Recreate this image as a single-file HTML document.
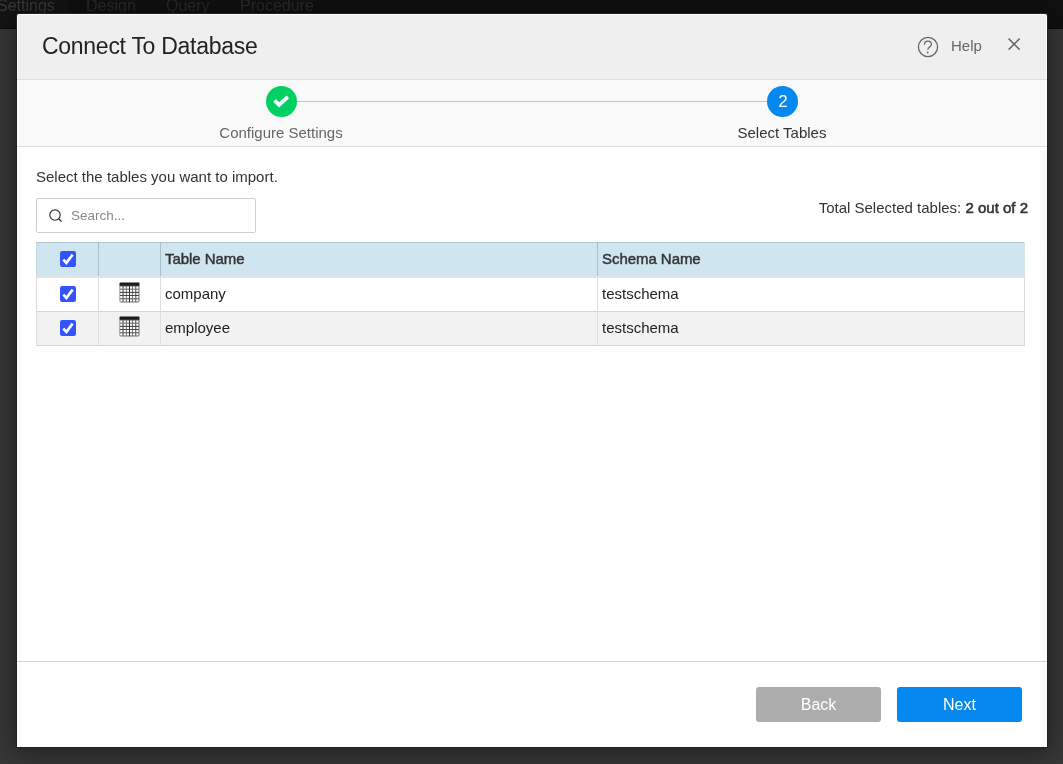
<!DOCTYPE html>
<html><head><meta charset="utf-8">
<style>
*{box-sizing:border-box;margin:0;padding:0}
html,body{width:1063px;height:764px;overflow:hidden;background:#383838;font-family:"Liberation Sans",sans-serif}
.a{position:absolute}
.t{position:absolute;white-space:nowrap;line-height:1;will-change:transform}
</style></head><body>
<div class="a" style="left:0;top:0;width:1063px;height:29px;background:#101010"></div>
<div class="a" style="left:0;top:0;width:68px;height:29px;background:#141414"></div>
<div class="a" style="left:0;top:28px;width:1063px;height:1px;background:#0b0b0b"></div>
<div class="t" style="left:-3px;top:-2px;font-size:16px;color:#3a3a3a">Settings</div>
<div class="t" style="left:86px;top:-2px;font-size:16px;color:#2a2a2a">Design</div>
<div class="t" style="left:166px;top:-2px;font-size:16px;color:#2a2a2a">Query</div>
<div class="t" style="left:240px;top:-2px;font-size:16px;color:#2a2a2a">Procedure</div>

<div class="a" style="left:16px;top:13px;width:1032px;height:735px;border-radius:2px 2px 0 0;background:#222;box-shadow:0 3px 24px 3px rgba(0,0,0,0.42)"></div>
<div class="a" style="left:17px;top:14px;width:1030px;height:733px;background:#fff;border-radius:2px 2px 0 0"></div>
<div class="a" style="left:18px;top:15px;width:1028px;height:64px;background:#efefef"></div>
<div class="a" style="left:17px;top:79px;width:1030px;height:1px;background:#dedede"></div>
<div class="a" style="left:18px;top:80px;width:1028px;height:66px;background:#f9f9f9"></div>
<div class="a" style="left:17px;top:146px;width:1030px;height:1px;background:#dedede"></div>

<div class="t" style="left:42px;top:35px;font-size:23px;letter-spacing:-0.28px;color:#222">Connect To Database</div>
<svg class="a" style="left:917px;top:35.5px" width="22" height="22" viewBox="0 0 22 22">
  <circle cx="11" cy="11" r="9.6" fill="none" stroke="#666" stroke-width="1.3"/>
  <path d="M7.4 8.8 C7.4 6.5 9 5.1 10.9 5.1 C12.9 5.1 14.4 6.5 14.4 8.3 C14.4 10.6 11.1 11.2 10.7 13.6" fill="none" stroke="#666" stroke-width="1.25"/>
  <circle cx="10.7" cy="16.5" r="0.9" fill="#666"/>
</svg>
<div class="t" style="left:950.5px;top:38px;font-size:15px;color:#666">Help</div>
<svg class="a" style="left:1007px;top:37px" width="14" height="14" viewBox="0 0 14 14">
  <path d="M1.6 1.6 L12.6 12.6 M12.6 1.6 L1.6 12.6" stroke="#666" stroke-width="1.5"/>
</svg>

<div class="a" style="left:297px;top:101px;width:470px;height:1px;background:#c4c4c4"></div>
<svg class="a" style="left:266px;top:86px" width="31" height="31" viewBox="0 0 31 31">
  <circle cx="15.5" cy="15.5" r="15.5" fill="#00d063"/>
  <path d="M8.6 14.4 L13.1 18.8 L21.8 10.9" fill="none" stroke="#fff" stroke-width="3.8"/>
</svg>
<svg class="a" style="left:767px;top:86px" width="31" height="31" viewBox="0 0 31 31">
  <circle cx="15.5" cy="15.5" r="15.5" fill="#0788ee"/>
</svg>
<div class="t" style="left:767px;top:93px;width:32px;text-align:center;font-size:17px;color:#fff">2</div>
<div class="t" style="left:181px;top:125px;width:200px;text-align:center;font-size:15px;color:#666">Configure Settings</div>
<div class="t" style="left:682px;top:125px;width:200px;text-align:center;font-size:15px;color:#333">Select Tables</div>

<div class="t" style="left:36px;top:169px;font-size:15px;color:#333">Select the tables you want to import.</div>
<div class="a" style="left:36px;top:198px;width:220px;height:35px;border:1px solid #cfcfcf;border-radius:2px;background:#fff"></div>
<svg class="a" style="left:49px;top:209px" width="14" height="14" viewBox="0 0 14 14">
  <circle cx="6" cy="6" r="5.2" fill="none" stroke="#333" stroke-width="1.15"/>
  <path d="M9.7 9.7 L12.5 12.5" stroke="#333" stroke-width="1.3"/>
</svg>
<div class="t" style="left:71px;top:208.5px;font-size:13.5px;color:#888">Search...</div>
<div class="t" style="left:700px;top:200px;width:328px;text-align:right;font-size:15px;color:#333">Total Selected tables: <span style="-webkit-text-stroke:0.55px #333">2 out of 2</span></div>

<div class="a" style="left:36px;top:242px;width:989px;height:34px;background:#cfe5f0"></div>
<div class="a" style="left:36px;top:242px;width:989px;height:1px;background:#b0c7d1"></div>
<div class="a" style="left:36px;top:276px;width:989px;height:2px;background:#e4e4e4"></div>
<div class="a" style="left:36px;top:278px;width:989px;height:33px;background:#fff"></div>
<div class="a" style="left:36px;top:311px;width:989px;height:1px;background:#d6d6d6"></div>
<div class="a" style="left:36px;top:312px;width:989px;height:33px;background:#f2f2f2"></div>
<div class="a" style="left:36px;top:345px;width:989px;height:1px;background:#d6d6d6"></div>
<div class="a" style="left:36px;top:242px;width:1px;height:34px;background:#c2d6df"></div>
<div class="a" style="left:36px;top:276px;width:1px;height:70px;background:#dcdcdc"></div>
<div class="a" style="left:1024px;top:242px;width:1px;height:34px;background:#d8e3e8"></div>
<div class="a" style="left:1024px;top:276px;width:1px;height:70px;background:#dcdcdc"></div>
<div class="a" style="left:98px;top:242px;width:1px;height:34px;background:#a9bfc9"></div>
<div class="a" style="left:98px;top:276px;width:1px;height:70px;background:#dedede"></div>
<div class="a" style="left:160px;top:242px;width:1px;height:34px;background:#a9bfc9"></div>
<div class="a" style="left:160px;top:276px;width:1px;height:70px;background:#dedede"></div>
<div class="a" style="left:597px;top:242px;width:1px;height:34px;background:#a9bfc9"></div>
<div class="a" style="left:597px;top:276px;width:1px;height:70px;background:#dedede"></div>

<div class="t" style="left:165px;top:251px;font-size:15px;letter-spacing:-0.05px;-webkit-text-stroke:0.45px #333;color:#333">Table Name</div>
<div class="t" style="left:602px;top:251px;font-size:15px;letter-spacing:-0.05px;-webkit-text-stroke:0.45px #333;color:#333">Schema Name</div>
<div class="t" style="left:165px;top:286px;font-size:15px;color:#222">company</div>
<div class="t" style="left:602px;top:286px;font-size:15px;color:#222">testschema</div>
<div class="t" style="left:165px;top:320px;font-size:15px;color:#222">employee</div>
<div class="t" style="left:602px;top:320px;font-size:15px;color:#222">testschema</div>
<div class="a" style="left:60px;top:251px;width:16px;height:16px"><svg width="16" height="16" viewBox="0 0 16 16"><rect x="0" y="0" width="16" height="16" rx="2.2" fill="#3353ff"/><path d="M3.3 8.6 L6.4 11.9 L12.6 3.6" fill="none" stroke="#fff" stroke-width="2.6" stroke-linejoin="miter"/></svg></div>
<div class="a" style="left:60px;top:286px;width:16px;height:16px"><svg width="16" height="16" viewBox="0 0 16 16"><rect x="0" y="0" width="16" height="16" rx="2.2" fill="#3353ff"/><path d="M3.3 8.6 L6.4 11.9 L12.6 3.6" fill="none" stroke="#fff" stroke-width="2.6" stroke-linejoin="miter"/></svg></div>
<div class="a" style="left:60px;top:320px;width:16px;height:16px"><svg width="16" height="16" viewBox="0 0 16 16"><rect x="0" y="0" width="16" height="16" rx="2.2" fill="#3353ff"/><path d="M3.3 8.6 L6.4 11.9 L12.6 3.6" fill="none" stroke="#fff" stroke-width="2.6" stroke-linejoin="miter"/></svg></div>
<div class="a" style="left:119px;top:282px;width:21px;height:21px"><svg width="21" height="21" viewBox="-0.5 -0.5 21 21"><defs><filter id="f1" x="-10%" y="-10%" width="120%" height="120%"><feGaussianBlur stdDeviation="0.33"/></filter></defs><g filter="url(#f1)"><rect x="0" y="0" width="20" height="20" rx="1.4" fill="#727272"/><rect x="0.75" y="4.05" width="2.1" height="2.1" fill="#fff"/><rect x="0.75" y="7.25" width="2.1" height="2.1" fill="#fff"/><rect x="0.75" y="10.35" width="2.1" height="2.1" fill="#fff"/><rect x="0.75" y="13.45" width="2.1" height="2.1" fill="#fff"/><rect x="0.75" y="16.85" width="2.1" height="2.1" fill="#fff"/><rect x="4.25" y="4.05" width="2.1" height="2.1" fill="#fff"/><rect x="4.25" y="7.25" width="2.1" height="2.1" fill="#fff"/><rect x="4.25" y="10.35" width="2.1" height="2.1" fill="#fff"/><rect x="4.25" y="13.45" width="2.1" height="2.1" fill="#fff"/><rect x="4.25" y="16.85" width="2.1" height="2.1" fill="#fff"/><rect x="7.40" y="4.05" width="2.1" height="2.1" fill="#fff"/><rect x="7.40" y="7.25" width="2.1" height="2.1" fill="#fff"/><rect x="7.40" y="10.35" width="2.1" height="2.1" fill="#fff"/><rect x="7.40" y="13.45" width="2.1" height="2.1" fill="#fff"/><rect x="7.40" y="16.85" width="2.1" height="2.1" fill="#fff"/><rect x="10.35" y="4.05" width="2.1" height="2.1" fill="#fff"/><rect x="10.35" y="7.25" width="2.1" height="2.1" fill="#fff"/><rect x="10.35" y="10.35" width="2.1" height="2.1" fill="#fff"/><rect x="10.35" y="13.45" width="2.1" height="2.1" fill="#fff"/><rect x="10.35" y="16.85" width="2.1" height="2.1" fill="#fff"/><rect x="13.45" y="4.05" width="2.1" height="2.1" fill="#fff"/><rect x="13.45" y="7.25" width="2.1" height="2.1" fill="#fff"/><rect x="13.45" y="10.35" width="2.1" height="2.1" fill="#fff"/><rect x="13.45" y="13.45" width="2.1" height="2.1" fill="#fff"/><rect x="13.45" y="16.85" width="2.1" height="2.1" fill="#fff"/><rect x="16.85" y="4.05" width="2.1" height="2.1" fill="#fff"/><rect x="16.85" y="7.25" width="2.1" height="2.1" fill="#fff"/><rect x="16.85" y="10.35" width="2.1" height="2.1" fill="#fff"/><rect x="16.85" y="13.45" width="2.1" height="2.1" fill="#fff"/><rect x="16.85" y="16.85" width="2.1" height="2.1" fill="#fff"/><rect x="0.2" y="0.2" width="19.6" height="3.0" fill="#1b1b1b"/><rect x="9.5" y="3" width="0.9" height="16.7" fill="#262626"/><rect x="0.6" y="9.45" width="18.8" height="0.8" fill="#3c3c3c"/><rect x="0.6" y="12.55" width="18.8" height="0.8" fill="#3c3c3c"/></g></svg></div>
<div class="a" style="left:119px;top:316px;width:21px;height:21px"><svg width="21" height="21" viewBox="-0.5 -0.5 21 21"><defs><filter id="f2" x="-10%" y="-10%" width="120%" height="120%"><feGaussianBlur stdDeviation="0.33"/></filter></defs><g filter="url(#f2)"><rect x="0" y="0" width="20" height="20" rx="1.4" fill="#727272"/><rect x="0.75" y="4.05" width="2.1" height="2.1" fill="#fff"/><rect x="0.75" y="7.25" width="2.1" height="2.1" fill="#fff"/><rect x="0.75" y="10.35" width="2.1" height="2.1" fill="#fff"/><rect x="0.75" y="13.45" width="2.1" height="2.1" fill="#fff"/><rect x="0.75" y="16.85" width="2.1" height="2.1" fill="#fff"/><rect x="4.25" y="4.05" width="2.1" height="2.1" fill="#fff"/><rect x="4.25" y="7.25" width="2.1" height="2.1" fill="#fff"/><rect x="4.25" y="10.35" width="2.1" height="2.1" fill="#fff"/><rect x="4.25" y="13.45" width="2.1" height="2.1" fill="#fff"/><rect x="4.25" y="16.85" width="2.1" height="2.1" fill="#fff"/><rect x="7.40" y="4.05" width="2.1" height="2.1" fill="#fff"/><rect x="7.40" y="7.25" width="2.1" height="2.1" fill="#fff"/><rect x="7.40" y="10.35" width="2.1" height="2.1" fill="#fff"/><rect x="7.40" y="13.45" width="2.1" height="2.1" fill="#fff"/><rect x="7.40" y="16.85" width="2.1" height="2.1" fill="#fff"/><rect x="10.35" y="4.05" width="2.1" height="2.1" fill="#fff"/><rect x="10.35" y="7.25" width="2.1" height="2.1" fill="#fff"/><rect x="10.35" y="10.35" width="2.1" height="2.1" fill="#fff"/><rect x="10.35" y="13.45" width="2.1" height="2.1" fill="#fff"/><rect x="10.35" y="16.85" width="2.1" height="2.1" fill="#fff"/><rect x="13.45" y="4.05" width="2.1" height="2.1" fill="#fff"/><rect x="13.45" y="7.25" width="2.1" height="2.1" fill="#fff"/><rect x="13.45" y="10.35" width="2.1" height="2.1" fill="#fff"/><rect x="13.45" y="13.45" width="2.1" height="2.1" fill="#fff"/><rect x="13.45" y="16.85" width="2.1" height="2.1" fill="#fff"/><rect x="16.85" y="4.05" width="2.1" height="2.1" fill="#fff"/><rect x="16.85" y="7.25" width="2.1" height="2.1" fill="#fff"/><rect x="16.85" y="10.35" width="2.1" height="2.1" fill="#fff"/><rect x="16.85" y="13.45" width="2.1" height="2.1" fill="#fff"/><rect x="16.85" y="16.85" width="2.1" height="2.1" fill="#fff"/><rect x="0.2" y="0.2" width="19.6" height="3.0" fill="#1b1b1b"/><rect x="9.5" y="3" width="0.9" height="16.7" fill="#262626"/><rect x="0.6" y="9.45" width="18.8" height="0.8" fill="#3c3c3c"/><rect x="0.6" y="12.55" width="18.8" height="0.8" fill="#3c3c3c"/></g></svg></div>

<div class="a" style="left:17px;top:661px;width:1030px;height:1px;background:#d6d6d6"></div>
<div class="a" style="left:756px;top:687px;width:125px;height:35px;background:#adadad;border-radius:3px"></div>
<div class="t" style="left:756px;top:696.5px;width:125px;text-align:center;font-size:16px;color:#fff">Back</div>
<div class="a" style="left:897px;top:687px;width:125px;height:35px;background:#0788ee;border-radius:3px"></div>
<div class="t" style="left:897px;top:696.5px;width:125px;text-align:center;font-size:16px;color:#fff">Next</div>
</body></html>
